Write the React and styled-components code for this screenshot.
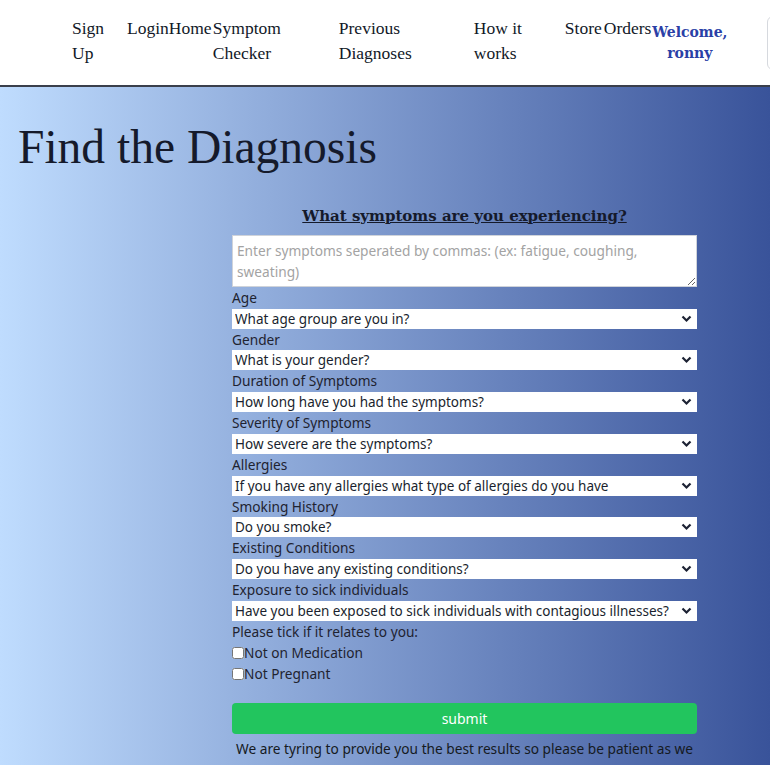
import React from "react";
import styled, { createGlobalStyle } from "styled-components";

const GlobalStyle = createGlobalStyle`
  body {
    margin: 0;
    overflow-x: hidden;
  }
`;

const Header = styled.header`
  height: 85px;
  background: #ffffff;
  border-bottom: 2px solid #3a3f4b;
  display: flex;
  align-items: center;
  padding-left: 72px;
  overflow: hidden;
`;

const NavList = styled.nav`
  align-self: flex-start;
  padding-top: 16px;
  display: flex;
  font-family: "Liberation Serif", Georgia, serif;
  font-size: 17.5px;
  line-height: 25px;
`;

const NavLink = styled.a`
  flex: 0 0 ${(p) => p.w}px;
  color: #111827;
  text-decoration: none;
  white-space: ${(p) => (p.nowrap ? "nowrap" : "normal")};
`;

const Welcome = styled.div`
  flex: 0 0 76px;
  text-align: center;
  font-family: "DejaVu Serif", Georgia, serif;
  font-size: 14px;
  line-height: 21px;
  font-weight: bold;
  color: #2a40a6;
`;

const CartBox = styled.div`
  flex: 0 0 200px;
  height: 52px;
  margin-left: 39px;
  border: 1px solid #d6d9de;
  border-radius: 6px;
`;

const Main = styled.main`
  min-height: 700px;
  background: linear-gradient(to right, #bfdcfe, #39539a);
  padding: 1px 0 40px;
`;

const Title = styled.h1`
  margin: 34px 0 0 18px;
  font-family: "Liberation Serif", Georgia, serif;
  font-weight: normal;
  font-size: 47.5px;
  line-height: 50px;
  color: #151a2b;
`;

const Form = styled.form`
  width: 465px;
  margin: 34px 0 0 232px;
  display: flex;
  flex-direction: column;
  font-family: "Noto Sans", "Segoe UI", sans-serif;
  font-size: 13.7px;
  color: #1f2330;
`;

const Question = styled.h2`
  margin: 0 0 9px;
  text-align: center;
  font-family: "DejaVu Serif", Georgia, serif;
  font-size: 15px;
  line-height: 20px;
  font-weight: bold;
  text-decoration: underline;
  color: #151a2b;
`;

const Symptoms = styled.textarea`
  box-sizing: border-box;
  height: 52px;
  padding: 4px 4px;
  border: 1px solid #cfd3da;
  font-family: inherit;
  font-size: 13.7px;
  line-height: 21px;
  resize: vertical;
  &::placeholder {
    color: #a3a3a3;
  }
`;

const Label = styled.label`
  display: block;
  line-height: 20.7px;
  margin-top: ${(p) => (p.first ? "1px" : "0")};
`;

const SelectWrap = styled.div`
  position: relative;
  height: 20px;
  margin-bottom: 1px;
`;

const Select = styled.select`
  appearance: none;
  width: 100%;
  height: 20px;
  border: none;
  border-radius: 0;
  background: #ffffff;
  padding: 0 17px 0 3px;
  font-family: inherit;
  font-size: 13.5px;
  color: #1a1f2e;
  outline: none;
`;

const Chevron = styled.svg`
  position: absolute;
  right: 5px;
  top: 5px;
  width: 11px;
  height: 9px;
  pointer-events: none;
`;

const CheckRow = styled.label`
  display: flex;
  align-items: center;
  line-height: 21px;
  input {
    margin: 0;
    width: 12px;
    height: 12px;
  }
`;

const Submit = styled.button`
  margin-top: 19px;
  height: 31px;
  border: none;
  border-radius: 4px;
  background: #22c55e;
  color: #ffffff;
  font-family: inherit;
  font-size: 14px;
`;

const Note = styled.p`
  margin: 2px 0 0;
  text-align: center;
  line-height: 25px;
  color: #151a22;
`;

const fields = [
  ["Age", "What age group are you in?"],
  ["Gender", "What is your gender?"],
  ["Duration of Symptoms", "How long have you had the symptoms?"],
  ["Severity of Symptoms", "How severe are the symptoms?"],
  ["Allergies", "If you have any allergies what type of allergies do you have"],
  ["Smoking History", "Do you smoke?"],
  ["Existing Conditions", "Do you have any existing conditions?"],
  ["Exposure to sick individuals", "Have you been exposed to sick individuals with contagious illnesses?"],
];

function Dropdown({ placeholder }) {
  return (
    <SelectWrap>
      <Select defaultValue="">
        <option value="">{placeholder}</option>
      </Select>
      <Chevron viewBox="0 0 11 9">
        <path d="M1.5 2.5 L5.5 6.5 L9.5 2.5" fill="none" stroke="#1c2233" strokeWidth="2.2" />
      </Chevron>
    </SelectWrap>
  );
}

export default function App() {
  return (
    <>
      <GlobalStyle />
      <Header>
        <NavList>
          <NavLink w={55}>Sign Up</NavLink>
          <NavLink w={40} nowrap>Login</NavLink>
          <NavLink w={44} nowrap>Home</NavLink>
          <NavLink w={126}>Symptom Checker</NavLink>
          <NavLink w={135}>Previous Diagnoses</NavLink>
          <NavLink w={91}>How it works</NavLink>
          <NavLink w={39} nowrap>Store</NavLink>
          <NavLink w={48} nowrap>Orders</NavLink>
        </NavList>
        <Welcome>Welcome, ronny</Welcome>
        <CartBox />
      </Header>
      <Main>
        <Title>Find the Diagnosis</Title>
        <Form onSubmit={(e) => e.preventDefault()}>
          <Question>What symptoms are you experiencing?</Question>
          <Symptoms placeholder="Enter symptoms seperated by commas: (ex: fatigue, coughing, sweating)" />
          {fields.map(([label, placeholder], i) => (
            <div key={label}>
              <Label first={i === 0}>{label}</Label>
              <Dropdown placeholder={placeholder} />
            </div>
          ))}
          <Label>Please tick if it relates to you:</Label>
          <CheckRow>
            <input type="checkbox" />
            Not on Medication
          </CheckRow>
          <CheckRow>
            <input type="checkbox" />
            Not Pregnant
          </CheckRow>
          <Submit type="submit">submit</Submit>
          <Note>
            We are tyring to provide you the best results so please be patient as we
            process your symptoms and find the most likely diagnosis.
          </Note>
        </Form>
      </Main>
    </>
  );
}
